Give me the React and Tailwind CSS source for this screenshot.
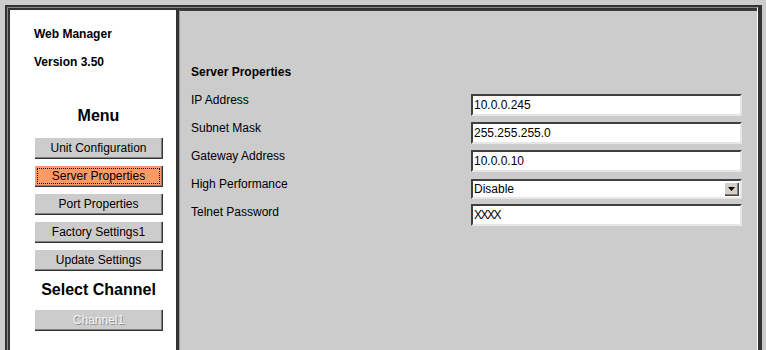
import React from "react";

const font = "font-['Liberation_Sans',Arial,Helvetica,sans-serif]";

function MenuButton({ children, active = false, disabled = false }) {
  return (
    <div
      className={`relative ml-[24px] w-[129px] h-[22px] flex items-center justify-center text-[12px] leading-[14px] ${
        active ? "bg-[#ff9966] text-black" : "bg-[#cccccc] text-black"
      } shadow-[inset_1px_1px_0_#ffffff,inset_-1px_-1px_0_#333333,inset_-2px_-2px_0_#808080]`}
    >
      <span
        className={
          disabled
            ? "text-[#f6f6f6] [text-shadow:1px_1px_0_#8e8e8e]"
            : ""
        }
      >
        {children}
      </span>
      {active && (
        <span className="absolute inset-[3px] border border-dotted border-black pointer-events-none" />
      )}
    </div>
  );
}

function TextBox({ value, mt, h = "h-[22px]", narrow = false }) {
  return (
    <div
      className={`${mt} ${h} w-[271px] bg-white border-2 border-t-[#404040] border-l-[#404040] border-b-[#e6e6e6] border-r-[#e6e6e6] flex items-center pl-[1px] text-[12px] leading-[14px] text-black`}
    >
      <span className={narrow ? "tracking-[-1.5px]" : ""}>{value}</span>
    </div>
  );
}

function SelectBox({ value, mt }) {
  return (
    <div
      className={`${mt} h-[20px] w-[271px] bg-white border-2 border-t-[#404040] border-l-[#404040] border-b-[#e6e6e6] border-r-[#e6e6e6] flex items-center justify-between pl-[1px] pr-[1px] text-[12px] leading-[14px] text-black`}
    >
      <span>{value}</span>
      <span className="w-[15px] h-[14px] bg-[#d4d0c8] flex items-center justify-center shadow-[inset_1px_1px_0_#ffffff,inset_-1px_-1px_0_#404040,inset_-2px_-2px_0_#808080]">
        <svg width="7" height="4" viewBox="0 0 7 4">
          <polygon points="0,0 7,0 3.5,4" fill="#000" />
        </svg>
      </span>
    </div>
  );
}

function Row({ label, children }) {
  return (
    <div className="flex h-[28px] items-start">
      <div className="w-[280px] text-[12px] leading-[16px] text-black">{label}</div>
      {children}
    </div>
  );
}

export default function App() {
  return (
    <div
      className={`${font} w-[766px] h-[350px] overflow-hidden bg-[#cccccc] pt-[5px] pl-[5px] pr-[4px]`}
    >
      <div className="h-[400px] border-t-2 border-l-2 border-r-4 border-[#333333]">
        <div className="h-full border-t border-l border-[#8a8a8a] border-r border-r-white">
          <div className="h-full border-t-2 border-l-2 border-[#333333] flex">
            {/* Left menu panel */}
            <div className="w-[166px] bg-white flex flex-col">
              <div className="pt-[16px] pl-[24px] text-[12px] leading-[16px] font-bold text-black">
                Web Manager
              </div>
              <div className="mt-[12px] pl-[24px] text-[12px] leading-[16px] font-bold text-black">
                Version 3.50
              </div>
              <div className="mt-[36px] ml-[24px] w-[129px] text-center text-[16px] leading-[20px] font-bold text-black">
                Menu
              </div>
              <div className="mt-[11px] flex flex-col gap-[6px]">
                <MenuButton>Unit Configuration</MenuButton>
                <MenuButton active>Server Properties</MenuButton>
                <MenuButton>Port Properties</MenuButton>
                <MenuButton>Factory Settings1</MenuButton>
                <MenuButton>Update Settings</MenuButton>
              </div>
              <div className="mt-[9px] ml-[24px] w-[129px] text-center text-[16px] leading-[20px] font-bold text-black">
                Select Channel
              </div>
              <div className="mt-[9px]">
                <MenuButton disabled>Channel1</MenuButton>
              </div>
            </div>

            {/* Separator */}
            <div className="w-[3px] bg-[#333333]" />

            {/* Right content panel */}
            <div className="flex-1 bg-[#cccccc] border-t border-[#404040] border-l border-l-[#9a9a9a] pl-[11px] pt-[53px]">
              <div className="text-[12px] leading-[16px] font-bold text-black">
                Server Properties
              </div>
              <div className="mt-[12px] flex flex-col">
                <Row label="IP Address">
                  <TextBox value="10.0.0.245" mt="mt-[2px]" />
                </Row>
                <Row label="Subnet Mask">
                  <TextBox value="255.255.255.0" mt="mt-[2px]" />
                </Row>
                <Row label="Gateway Address">
                  <TextBox value="10.0.0.10" mt="mt-[2px]" />
                </Row>
                <Row label="High Performance">
                  <SelectBox value="Disable" mt="mt-[3px]" />
                </Row>
                <Row label="Telnet Password">
                  <TextBox value="XXXX" mt="mt-[0px]" narrow />
                </Row>
              </div>
            </div>
          </div>
        </div>
      </div>
    </div>
  );
}
